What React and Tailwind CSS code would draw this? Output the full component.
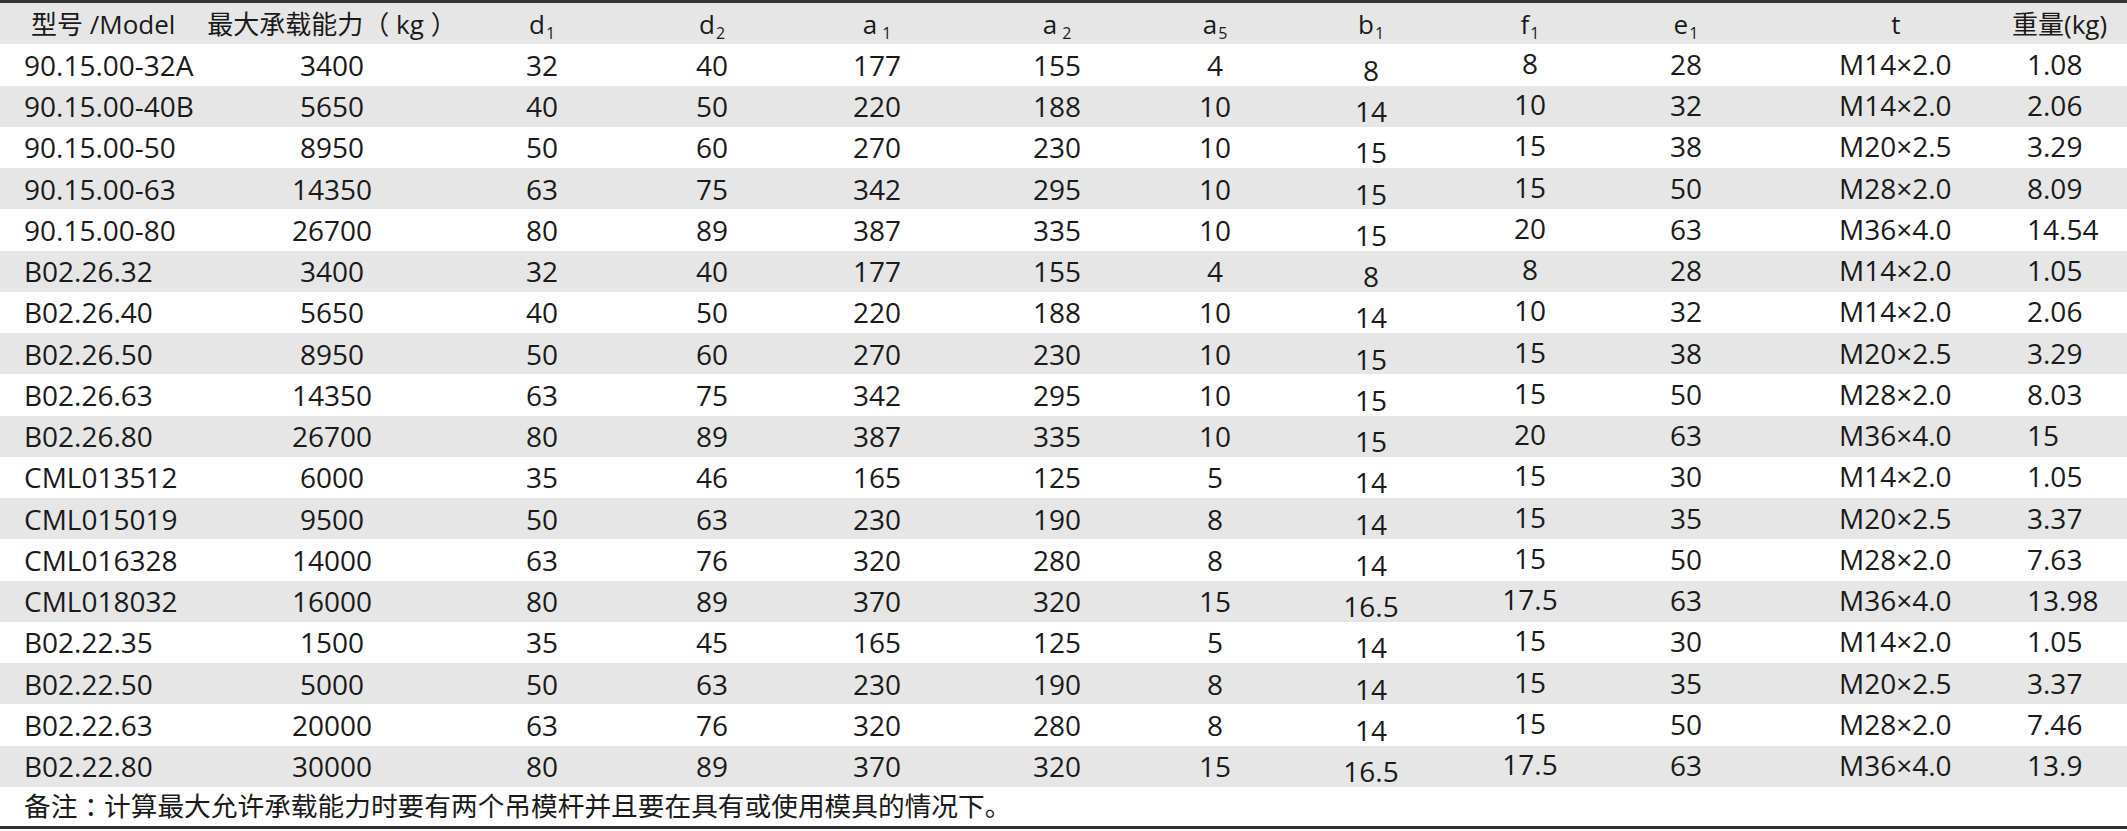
import React from 'react'

const rows = [
  ['90.15.00-32A', '3400', '32', '40', '177', '155', '4', '8', '8', '28', 'M14×2.0', '1.08'],
  ['90.15.00-40B', '5650', '40', '50', '220', '188', '10', '14', '10', '32', 'M14×2.0', '2.06'],
  ['90.15.00-50', '8950', '50', '60', '270', '230', '10', '15', '15', '38', 'M20×2.5', '3.29'],
  ['90.15.00-63', '14350', '63', '75', '342', '295', '10', '15', '15', '50', 'M28×2.0', '8.09'],
  ['90.15.00-80', '26700', '80', '89', '387', '335', '10', '15', '20', '63', 'M36×4.0', '14.54'],
  ['B02.26.32', '3400', '32', '40', '177', '155', '4', '8', '8', '28', 'M14×2.0', '1.05'],
  ['B02.26.40', '5650', '40', '50', '220', '188', '10', '14', '10', '32', 'M14×2.0', '2.06'],
  ['B02.26.50', '8950', '50', '60', '270', '230', '10', '15', '15', '38', 'M20×2.5', '3.29'],
  ['B02.26.63', '14350', '63', '75', '342', '295', '10', '15', '15', '50', 'M28×2.0', '8.03'],
  ['B02.26.80', '26700', '80', '89', '387', '335', '10', '15', '20', '63', 'M36×4.0', '15'],
  ['CML013512', '6000', '35', '46', '165', '125', '5', '14', '15', '30', 'M14×2.0', '1.05'],
  ['CML015019', '9500', '50', '63', '230', '190', '8', '14', '15', '35', 'M20×2.5', '3.37'],
  ['CML016328', '14000', '63', '76', '320', '280', '8', '14', '15', '50', 'M28×2.0', '7.63'],
  ['CML018032', '16000', '80', '89', '370', '320', '15', '16.5', '17.5', '63', 'M36×4.0', '13.98'],
  ['B02.22.35', '1500', '35', '45', '165', '125', '5', '14', '15', '30', 'M14×2.0', '1.05'],
  ['B02.22.50', '5000', '50', '63', '230', '190', '8', '14', '15', '35', 'M20×2.5', '3.37'],
  ['B02.22.63', '20000', '63', '76', '320', '280', '8', '14', '15', '50', 'M28×2.0', '7.46'],
  ['B02.22.80', '30000', '80', '89', '370', '320', '15', '16.5', '17.5', '63', 'M36×4.0', '13.9'],
]

const grid =
  'grid grid-cols-[220px_224px_196px_144px_186px_174px_142px_170px_148px_164px_256px_1fr] items-center'

// per-column cell classes for the data rows
const cellCls = [
  'pl-[24px]',
  'flex justify-center',
  'flex justify-center',
  'flex justify-center',
  'flex justify-center',
  'flex justify-center',
  'flex justify-center',
  'flex justify-center translate-y-[5px]',
  'flex justify-center -translate-y-[2px]',
  'flex justify-center -translate-y-[1px]',
  'pl-[71px] -translate-y-[1px]',
  'pl-[3px] -translate-y-[1px]',
]

const Sym = ({ base, sub, gap }) => (
  <span className="flex justify-center items-baseline">
    <span>{base}</span>
    <span className={`text-[16px] translate-y-[5px] ${gap ? 'ml-[5px]' : 'ml-[1px]'}`}>{sub}</span>
  </span>
)

const ProductTable = () => {
  return (
    <div className="w-[2127px] h-[831px] bg-white text-[#1a1a1a] font-['Open_Sans','Noto_Sans_CJK_SC',sans-serif] overflow-hidden">
      <div className="border-t-[3px] border-[#333]">
        {/* Header */}
        <div className={`${grid} h-[41.25px] bg-[#e6e6e6] text-[26px] leading-none whitespace-nowrap`}>
          <div className="pl-[31px]">型号 /Model</div>
          <div className="flex justify-center">最大承载能力（ kg ）</div>
          <Sym base="d" sub="1" />
          <Sym base="d" sub="2" />
          <Sym base="a" sub="1" gap />
          <Sym base="a" sub="2" gap />
          <Sym base="a" sub="5" />
          <Sym base="b" sub="1" />
          <Sym base="f" sub="1" />
          <Sym base="e" sub="1" />
          <div className="flex justify-center">t</div>
          <div className="-ml-[12px]">重量(kg)</div>
        </div>

        {/* Data rows */}
        {rows.map((r, i) => (
          <div
            key={r[0]}
            className={`${grid} h-[41.25px] text-[28px] leading-none whitespace-nowrap ${i % 2 === 1 ? 'bg-[#e6e6e6]' : 'bg-white'}`}
          >
            {r.map((v, j) => (
              <div key={j} className={cellCls[j]}>
                {v}
              </div>
            ))}
          </div>
        ))}

        {/* Note */}
        <div className="h-[39px] flex items-center pl-[24px] text-[26.7px] leading-none whitespace-nowrap border-b-[3px] border-[#333] box-content">
          备注<span className="font-['Noto_Sans_CJK_TC',sans-serif]">：</span>计算最大允许承载能力时要有两个吊模杆并且要在具有或使用模具的情况下。
        </div>
      </div>
    </div>
  )
}

export default function App() {
  return <ProductTable />
}
